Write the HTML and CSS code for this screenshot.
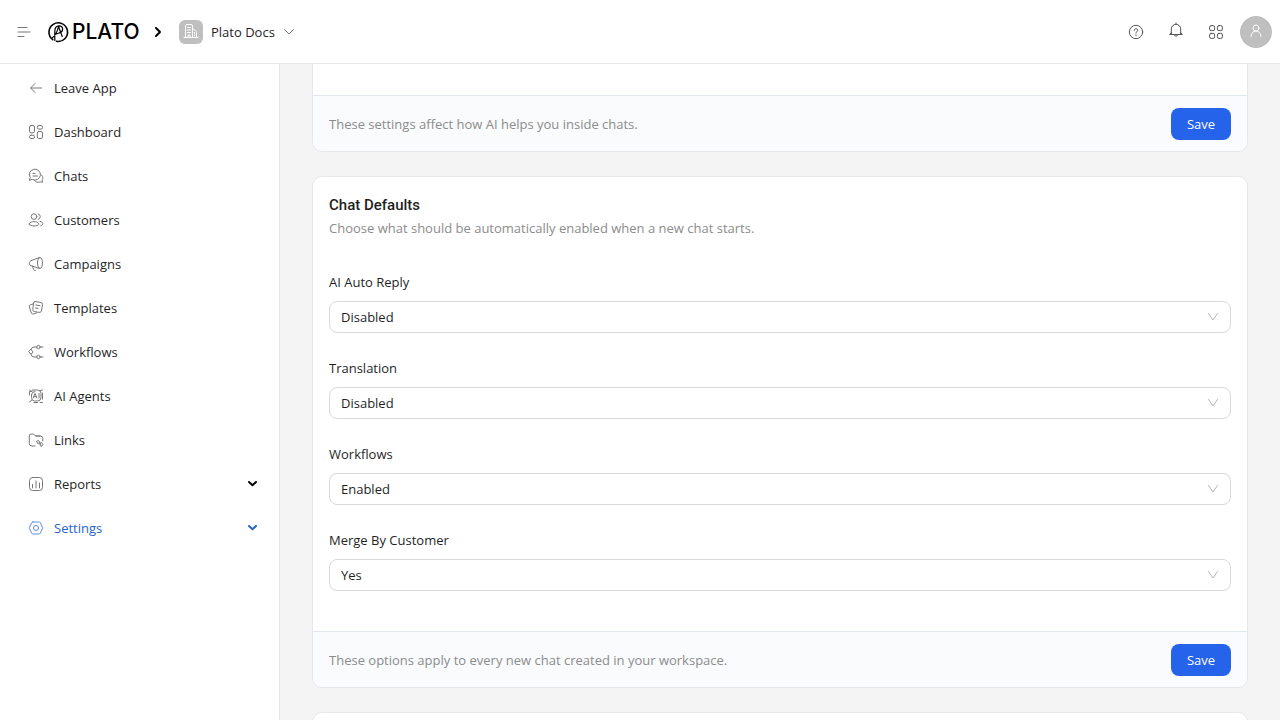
FILE: index.html
```html
<!DOCTYPE html>
<html lang="en">
<head>
<meta charset="utf-8">
<meta name="viewport" content="width=device-width, initial-scale=1">
<title>Plato Docs – Settings</title>
<link rel="stylesheet" href="styles.css">
</head>
<body>
<header class="topbar">
  <button class="icon-button" aria-label="Toggle menu"><svg class="icon" viewBox="0 0 16 16"><path d="M2 3.500h9M2 8h12M2 12.500h6"/></svg></button>
  <a class="brand" href="#" aria-label="Plato">
    <svg class="brand-mark" viewBox="0 0 20 20"><path class="ring" d="M4.800 17.700A9.300 9.300 0 1 1 8.500 19.300"/><path d="M3.500 16.500C7 14 9.500 9.500 10.500 4.500L14.200 14.500M6.800 18.500V9.500C6.800 5.500 8.500 3.800 11 3.800C16 3.800 15.500 10 11.500 10.800L8.500 12"/></svg>
    <span class="brand-name">PLATO</span>
  </a>
  <svg class="crumb" viewBox="0 0 16 16"><path d="M6 4l4 4-4 4"/></svg>
  <button class="workspace">
    <span class="workspace-logo"><svg class="icon" viewBox="0 0 16 16"><path d="M1 13.500h14M2.500 13.500V2Q2.500 .5 4 .5h4Q9.500 .5 9.500 2v11.500M9.500 4.500l3 2q1 .7 1 2v5M4.500 3.500h3M4.500 6h3M4.500 8.500h3M5 13.500v-2.500h2v2.500M11.500 8.500v1M11.500 11v1"/></svg></span>
    <span>Plato Docs</span>
    <svg class="chevron-wide" viewBox="0 0 12 12"><path d="M1.500 3.500l4.500 4.500 4.500-4.500"/></svg>
  </button>
  <div class="actions">
    <button class="action" aria-label="Help"><svg class="icon" viewBox="0 0 16 16"><circle cx="8" cy="8" r="6.700"/><path d="M6.300 6.300C6.300 4 9.700 4 9.700 6.200C9.700 7.500 8 7.500 8 9.200M8 11v.7"/></svg></button>
    <button class="action" aria-label="Notifications"><svg class="icon bell" viewBox="0 0 16 16"><path d="M2 12.500h12M3.300 12.300V7A4.700 4.700 0 0 1 12.700 7v5.300M2 12.500l1.300-2M14 12.500l-1.300-2M8 2V1M6.400 12.700a1.600 1.600 0 0 0 3.200 0"/></svg></button>
    <button class="action" aria-label="Apps"><svg class="icon" viewBox="0 0 16 16"><rect x="1.600" y="1.600" width="5" height="5" rx="1.600"/><rect x="9.400" y="1.600" width="5" height="5" rx="1.600"/><rect x="1.600" y="9.400" width="5" height="5" rx="1.600"/><rect x="9.400" y="9.400" width="5" height="5" rx="1.600"/></svg></button>
    <button class="avatar" aria-label="Account"><svg class="icon" viewBox="0 0 16 16"><circle cx="8" cy="4" r="3"/><path d="M3 12.500C3.200 9 5.200 7 8 7s4.800 2 5 5.500"/></svg></button>
  </div>
</header>
<div class="shell">
  <nav class="sidebar" aria-label="Main">
    <a class="nav-item" href="#"><svg class="icon" viewBox="0 0 16 16"><path d="M13.500 8H3M7 3.500L2.500 8 7 12.500"/></svg><span>Leave App</span></a>
    <a class="nav-item" href="#"><svg class="icon" viewBox="0 0 16 16"><rect x="1.500" y="1.500" width="5" height="7.300" rx="1.500"/><rect x="9.300" y="1.500" width="5.200" height="3.600" rx="1.500"/><rect x="1.500" y="11.200" width="5" height="3.300" rx="1.500"/><rect x="9.300" y="7.500" width="5.200" height="7" rx="1.500"/></svg><span>Dashboard</span></a>
    <a class="nav-item" href="#"><svg class="icon" viewBox="0 0 16 16"><path d="M1.500 12l.7-2.500A5.500 5.500 0 1 1 4.500 11.600ZM13 6.500c2.200 1.700 2.100 4 1.100 5.600l.4 2.200-2.200-.5C9.500 15 7.500 14 6.500 12.500M5 5.500h2M5 8h4.500"/></svg><span>Chats</span></a>
    <a class="nav-item" href="#"><svg class="icon" viewBox="0 0 16 16"><circle cx="6" cy="4.600" r="2.800"/><path d="M10.200 1.900a2.800 2.800 0 0 1 0 5.400M1.200 12.200C1.200 8.600 10.800 8.600 10.800 12.200C10.800 14.600 1.200 14.600 1.200 12.200ZM12 9.300c3.500.8 4 3.800.7 4.500"/></svg><span>Customers</span></a>
    <a class="nav-item" href="#"><svg class="icon" viewBox="0 0 16 16"><path d="M11.500 1.500L4 4.300C.5 5 .5 9.700 4 10l7.500 2.500M4.500 10.200l1.200 3.500q.6 1.200 2 .6"/><ellipse cx="12" cy="7" rx="2.500" ry="5.500"/></svg><span>Campaigns</span></a>
    <a class="nav-item" href="#"><svg class="icon" viewBox="0 0 16 16"><path d="M7 1.500l6 1q2 .4 1.600 2.200L13.400 11q-.4 1.700-2.200 1.400l-5-.9q-1.800-.4-1.400-2.200L5.600 3Q6 1.400 7 1.500ZM4.800 4l-2.500.8Q.9 5.300 1.400 7l2 6q.6 1.500 2.200 1l3.200-1.200M8 5l4 .7M7.500 8l2.500.4"/></svg><span>Templates</span></a>
    <a class="nav-item" href="#"><svg class="icon" viewBox="0 0 16 16"><circle cx="10.500" cy="3" r="1.700"/><circle cx="10.500" cy="13" r="1.700"/><path d="M3 5.600L5.100 8 3 10.400.9 8ZM3 5.500Q3.500 3 6 3h2.800M3 10.500Q3.500 13 6 13h2.800M12.200 3H15M12.200 13H15"/></svg><span>Workflows</span></a>
    <a class="nav-item" href="#"><svg class="icon" viewBox="0 0 16 16"><path d="M1.500 7V3.500H4M1.500 2l2 1.500M4 2h5.500q3.500 0 3.500 3.500v4q0 3.500-3.500 3.500h-3Q3.500 13 3.500 9.500V7Q3.500 3.500 7 3.500M12 3l2.500-1M14.500 5v6M12 14.500h2.500M6 14.500h3.500M3.500 12.500l-2 1.500M5.200 10L7 5.500 8.800 10M5.900 8.700h2.200M11 5.500V10"/></svg><span>AI Agents</span></a>
    <a class="nav-item" href="#"><svg class="icon" viewBox="0 0 16 16"><path d="M7 14H4Q1.300 14 1.300 11.500V4Q1.300 2 3.300 2h2.200l2 2h5Q14.700 4 14.700 6.500V9M8 4h4M8.700 9.300l1.700-1 1.800 2.200-1.500 1.300ZM12 12l1.500-1.500 1.500 2-1.500 2-1.500-1M10.700 10l2.500 3.200"/></svg><span>Links</span></a>
    <a class="nav-item" href="#"><svg class="icon" viewBox="0 0 16 16"><rect x="1.500" y="1.500" width="13" height="13" rx="3"/><path d="M4.500 8.500V12M8 5v7M11.500 7v5"/></svg><span>Reports</span><svg class="chevron-bold" viewBox="0 0 12 12"><path d="M2 4L5.500 7.300 9 4"/></svg></a>
    <a class="nav-item active" href="#" aria-current="page"><svg class="icon" viewBox="0 0 16 16"><path d="M5 2h6q.8 0 1.200.7l2.300 4.500q.3.800 0 1.600l-2.300 4.500q-.4.700-1.200.7H5q-.8 0-1.200-.7L1.500 8.800q-.3-.8 0-1.600l2.300-4.500Q4.200 2 5 2Z"/><circle cx="8" cy="8" r="2.500"/></svg><span>Settings</span><svg class="chevron-bold" viewBox="0 0 12 12"><path d="M2 4L5.500 7.300 9 4"/></svg></a>
  </nav>
  <main class="content">
    <section class="card card-continued">
      <div class="card-tail"></div>
      <footer class="card-footer"><p>These settings affect how AI helps you inside chats.</p><button class="save">Save</button></footer>
    </section>
    <section class="card">
      <div class="card-body">
        <h2 class="card-title">Chat Defaults</h2>
        <p class="card-description">Choose what should be automatically enabled when a new chat starts.</p>
        <form class="fields">
          <div class="field"><label for="reply">AI Auto Reply</label><div class="select"><select id="reply"><option>Disabled</option><option>Enabled</option></select><svg class="select-arrow" viewBox="0 0 12 12"><path d="M1.500 2.500L6 9l4.500-6.500"/></svg></div></div>
          <div class="field"><label for="translation">Translation</label><div class="select"><select id="translation"><option>Disabled</option><option>Enabled</option></select><svg class="select-arrow" viewBox="0 0 12 12"><path d="M1.500 2.500L6 9l4.500-6.500"/></svg></div></div>
          <div class="field"><label for="workflows">Workflows</label><div class="select"><select id="workflows"><option>Enabled</option><option>Disabled</option></select><svg class="select-arrow" viewBox="0 0 12 12"><path d="M1.500 2.500L6 9l4.500-6.500"/></svg></div></div>
          <div class="field"><label for="merge">Merge By Customer</label><div class="select"><select id="merge"><option>Yes</option><option>No</option></select><svg class="select-arrow" viewBox="0 0 12 12"><path d="M1.500 2.500L6 9l4.500-6.500"/></svg></div></div>
        </form>
      </div>
      <footer class="card-footer"><p>These options apply to every new chat created in your workspace.</p><button class="save">Save</button></footer>
    </section>
    <section class="card"><div class="card-body"></div></section>
  </main>
</div>
</body>
</html>
```
FILE: styles.css
```css
* { box-sizing: border-box; }
body {
  margin: 0;
  height: 100vh;
  display: flex;
  flex-direction: column;
  overflow: hidden;
  background: #f4f4f4;
  color: #1f1f1f;
  font: 13px/22px "Open Sans", "Noto Sans", sans-serif;
}
button, select { font: inherit; color: inherit; }
button { border: 0; padding: 0; background: none; cursor: pointer; }
a { color: inherit; text-decoration: none; }
h2, p { margin: 0; }
svg { display: block; flex: none; fill: none; stroke: currentColor; stroke-linecap: round; stroke-linejoin: round; }
.icon { width: 16px; height: 16px; stroke-width: 1; }

.topbar {
  flex: none;
  display: flex;
  align-items: center;
  height: 64px;
  padding: 0 8px 0 16px;
  background: #fff;
  border-bottom: 1px solid #e5e7eb;
}
.icon-button { color: #777; }
.brand { display: flex; align-items: center; gap: 4px; margin-left: 16px; color: #000; }
.brand-mark { width: 20px; height: 20px; stroke-width: 1.2; overflow: visible; }
.brand-mark .ring { stroke-width: 1.6; }
.brand-name { font: 500 21px/24px Inter, sans-serif; min-width: 70px; }
.crumb { width: 16px; height: 16px; margin-left: 8px; stroke-width: 2; color: #000; }
.workspace { display: flex; align-items: center; gap: 8px; margin-left: 13px; }
.workspace-logo {
  display: grid;
  place-items: center;
  width: 24px;
  height: 24px;
  border-radius: 6px;
  background: #bfbfbf;
  color: #fff;
}
.chevron-wide { width: 12px; height: 12px; color: #777; }
.actions { display: flex; align-items: center; gap: 8px; margin-left: auto; }
.action, .avatar { display: grid; place-items: center; width: 32px; height: 32px; color: #555; }
.bell { margin-bottom: 4px; }
.avatar { border-radius: 50%; background: #bfbfbf; color: #fff; }

.shell { flex: 1; min-height: 0; display: flex; }
.sidebar {
  flex: none;
  display: flex;
  flex-direction: column;
  gap: 4px;
  width: 280px;
  padding: 4px;
  background: #fff;
  border-right: 1px solid #e5e7eb;
}
.nav-item { display: flex; align-items: center; gap: 10px; height: 40px; padding: 0 16px 0 24px; }
.nav-item > .icon { color: #777; }
.nav-item.active { color: #2563cf; }
.nav-item.active > .icon { color: #5f8fe0; }
.chevron-bold { width: 12px; height: 12px; margin-left: auto; stroke-width: 2; }
.nav-item:not(.active) > .chevron-bold { color: #000; }

.content { flex: 1; min-width: 0; display: flex; flex-direction: column; gap: 24px; padding: 0 32px; overflow: hidden; }
.card { flex: none; background: #fff; border: 1px solid #e5e7eb; border-radius: 10px; overflow: hidden; }
.card-continued { border-top: 0; border-radius: 0 0 10px 10px; }
.card-tail { height: 31px; }
.card-body { padding: 16px 16px 40px; }
.card-title { font: 500 15px/24px Roboto, sans-serif; }
.card-description, .card-footer p { color: #8c8c8c; }
.fields { display: flex; flex-direction: column; gap: 24px; margin-top: 32px; }
.field label { display: block; margin-bottom: 8px; }
.select { display: grid; align-items: center; }
.select > * { grid-area: 1 / 1; }
.select select {
  appearance: none;
  width: 100%;
  height: 32px;
  padding: 0 32px 0 11px;
  background: #fff;
  border: 1px solid #d9d9d9;
  border-radius: 8px;
}
.select-arrow { justify-self: end; width: 12px; height: 12px; margin-right: 12px; color: #b5b5b5; pointer-events: none; }
.card-footer {
  display: flex;
  align-items: center;
  justify-content: space-between;
  padding: 12px 16px 11px;
  background: #f9fbfd;
  border-top: 1px solid #e2e8f0;
}
.save { height: 32px; min-width: 60px; padding: 0 14px; border-radius: 8px; background: #2563eb; color: #fff; }
```
